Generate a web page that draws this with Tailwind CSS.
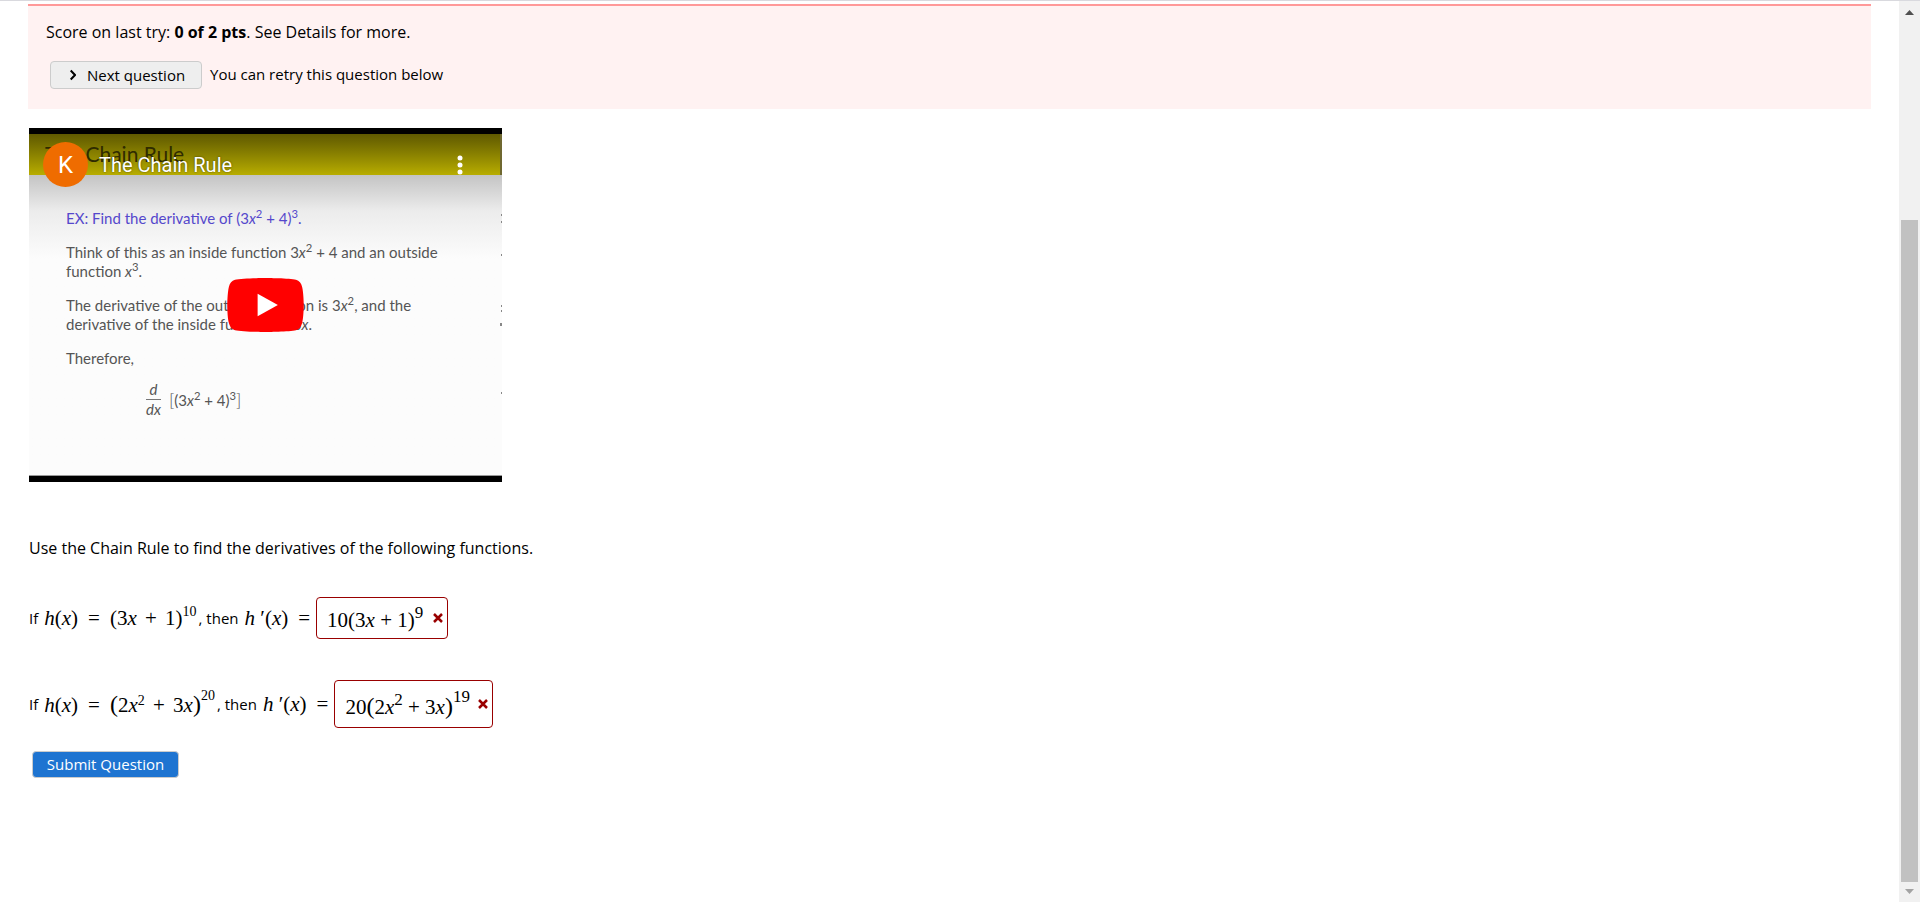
<!DOCTYPE html>
<html lang="en">
<head>
  <meta charset="UTF-8" />
  <meta name="viewport" content="width=device-width, initial-scale=1.0"/>
  <title>The Chain Rule</title>
  <script src="https://cdn.jsdelivr.net/npm/@tailwindcss/browser@4"></script>
</head>
<body class="flex min-h-screen flex-col border-t border-[#d9d9de] bg-white font-['Trebuchet_MS','Open_Sans',sans-serif] text-[15px] leading-5 text-black">
  <div class="flex flex-1">

    <main class="flex-1 pt-[3px] pr-7 pl-7">
      <!-- score banner -->
      <section class="h-[105px] border-t-2 border-[#ff9999] bg-[#fff2f2] px-[18px] pt-4">
        <p class="text-[16px] leading-5">Score on last try: <b>0 of 2 pts</b>. See Details for more.</p>
        <div class="mt-[19px] flex items-center gap-2 pl-1">
          <button class="flex h-7 w-[152px] items-center gap-[11px] rounded-sm border border-[#cccccc] bg-[#eeeeee] pl-[19px] whitespace-nowrap">
            <svg class="h-3 w-1.5" viewBox="0 0 6 12" fill="none" stroke="black" stroke-width="2"><path d="M0.7 1.5 5 6 0.7 10.5"/></svg>
            Next question
          </button>
          <span class="pb-0.5">You can retry this question below</span>
        </div>
      </section>

      <!-- video -->
      <section class="relative mt-[19px] ml-px flex h-[354px] w-[473px] flex-col border-t-6 border-b-6 border-black bg-[#fcfcfc] font-[Lato,sans-serif] text-[15px] text-[#555555]">
        <div class="h-[41px] bg-linear-to-b from-[#5f5900] to-[#b8ad00] pt-2 pl-4 text-[21px] leading-6 text-[#2f2b00]">The Chain Rule</div>
        <div class="flex-1 border-b border-[#999999] bg-linear-to-b from-[#c4c4c4] via-[#ececec] via-12% to-[#fcfcfc] to-28% pt-[34px] pl-[37px] leading-[19px]">
          <p class="text-[#5548cc]">EX: Find the derivative of (3<i>x</i><sup>2</sup> + 4)<sup>3</sup>.</p>
          <p class="mt-[15px]">Think of this as an inside function 3<i>x</i><sup>2</sup> + 4 and an outside<br>function <i>x</i><sup>3</sup>.</p>
          <p class="mt-[15px]">The derivative of the outside function is 3<i>x</i><sup>2</sup>, and the<br>derivative of the inside function is 6<i>x</i>.</p>
          <p class="mt-[15px]">Therefore,</p>
          <div class="mt-3 ml-20 flex items-center gap-2">
            <span class="flex flex-col text-center italic"><span class="border-b border-[#777777]">d</span><span>dx</span></span>
            <span><span class="text-[18px] font-light">[</span>(3<i>x</i><sup>2</sup> + 4)<sup>3</sup><span class="text-[18px] font-light">]</span></span>
          </div>
        </div>

        <!-- edge of the next slide -->
        <svg class="absolute top-0 right-0 h-[341px] w-0.5" viewBox="0 0 2 341" fill="#888888"><path d="M0 0h2v41H0z" fill="#6f6830"/><path d="M1 80h1v2H1zM1 87h1v2H1zM1 120h1v2H1zM1 171h1v2H1zM1 176h1v2H1zM0 189h2v3H0zM1 258h1v2H1z"/></svg>

        <div class="absolute top-2 left-3.5 flex items-center gap-[11px] font-[Roboto,sans-serif] text-white">
          <span class="flex h-[45px] w-[45px] items-center justify-center rounded-full bg-[#ef6c00] text-[24px]">K</span>
          <a href="#" class="text-[20px] leading-6 [text-shadow:0_0_2px_rgba(0,0,0,0.6)]">The Chain Rule</a>
        </div>
        <button aria-label="More" class="absolute top-[21px] right-[39px]">
          <svg class="h-5 w-1.5" viewBox="0 0 6 20" fill="white"><circle cx="3" cy="3" r="2.5"/><circle cx="3" cy="10" r="2.5"/><circle cx="3" cy="17" r="2.5"/></svg>
        </button>
        <button aria-label="Play" class="absolute top-36 left-[198px]">
          <svg class="h-[54px] w-[77px]" viewBox="0 0 68 48"><path d="M66.52 7.74c-.78-2.93-2.49-5.41-5.42-6.19C55.79.13 34 0 34 0S12.21.13 6.9 1.55c-2.93.78-4.63 3.26-5.42 6.19C.06 13.05 0 24 0 24s.06 10.95 1.48 16.26c.78 2.93 2.49 5.41 5.42 6.19C12.21 47.87 34 48 34 48s21.79-.13 27.1-1.55c2.93-.78 4.64-3.26 5.42-6.19C67.94 34.95 68 24 68 24s-.06-10.95-1.48-16.26z" fill="#ff0000"/><path d="M45 24 27 14v20" fill="white"/></svg>
        </button>
      </section>

      <!-- question -->
      <section class="mt-14 pl-px">
        <p class="text-[16px] leading-5">Use the Chain Rule to find the derivatives of the following functions.</p>

        <div class="mt-[39px] flex h-[42px] items-center whitespace-nowrap">
          <span>If</span>
          <span class="ml-1.5 flex items-baseline gap-2.5 font-['Liberation_Serif',serif] text-[21px]">
            <span><i>h</i>(<i>x</i>)</span><span>=</span><span>(3<i>x</i><span class="px-[3px]"> + </span>1)<sup class="top-[-9px] text-[14px]">10</sup></span>
          </span>
          <span class="ml-0.5">, then</span>
          <span class="ml-1.5 flex items-baseline gap-2.5 font-['Liberation_Serif',serif] text-[21px]">
            <span><i>h</i> ′(<i>x</i>)</span><span>=</span>
          </span>
          <span class="ml-1.5 flex h-[42px] w-[132px] items-center justify-between rounded-sm border border-[#990000] pr-1 pl-2.5">
            <span role="textbox" aria-label="Answer 1" class="pt-1 font-['Liberation_Serif',serif] text-[21px]">10(3<i>x</i> + 1)<sup class="top-[-9px] text-[17px]">9</sup></span>
            <svg class="h-2.5 w-2.5" viewBox="0 0 10 10" stroke="#990000" stroke-width="2.5"><path d="M1 1 9 9M9 1 1 9"/></svg>
          </span>
        </div>

        <div class="mt-[41px] flex h-12 items-center whitespace-nowrap">
          <span>If</span>
          <span class="ml-1.5 flex items-baseline gap-2.5 font-['Liberation_Serif',serif] text-[21px]">
            <span><i>h</i>(<i>x</i>)</span><span>=</span><span><span class="text-[24px]">(</span>2<i>x</i><sup class="text-[14px]">2</sup><span class="px-[3px]"> + </span>3<i>x</i><span class="text-[24px]">)</span><sup class="top-[-12px] text-[14px]">20</sup></span>
          </span>
          <span class="ml-0.5">, then</span>
          <span class="ml-1.5 flex items-baseline gap-2.5 font-['Liberation_Serif',serif] text-[21px]">
            <span><i>h</i> ′(<i>x</i>)</span><span>=</span>
          </span>
          <span class="ml-1.5 flex h-12 w-[159px] items-center justify-between rounded-sm border border-[#990000] pr-1 pl-2.5">
            <span role="textbox" aria-label="Answer 2" class="pt-1 font-['Liberation_Serif',serif] text-[21px]">20<span class="text-[24px]">(</span>2<i>x</i><sup class="text-[17px]">2</sup> + 3<i>x</i><span class="text-[24px]">)</span><sup class="top-[-12px] text-[17px]">19</sup></span>
            <svg class="h-2.5 w-2.5" viewBox="0 0 10 10" stroke="#990000" stroke-width="2.5"><path d="M1 1 9 9M9 1 1 9"/></svg>
          </span>
        </div>

        <button class="mt-[23px] ml-[3px] h-[27px] w-[147px] rounded-sm border border-[#cccccc] bg-[#1e74d1] pb-0.5 font-medium text-white">Submit Question</button>
      </section>
    </main>

    <!-- scroll track -->
    <div class="flex w-[21px] flex-col items-center bg-[#f1f1f1] pt-[9px] pb-2">
      <svg class="h-[5px] w-[9px]" viewBox="0 0 9 5" fill="#505050"><path d="M4.500 0 9 5H0z"/></svg>
      <div class="mt-[205px] w-[17px] flex-1 bg-[#c1c1c1]"></div>
      <svg class="mt-[7px] h-[5px] w-[9px]" viewBox="0 0 9 5" fill="#a3a3a3"><path d="M0 0h9L4.500 5z"/></svg>
    </div>
  </div>
</body>
</html>
